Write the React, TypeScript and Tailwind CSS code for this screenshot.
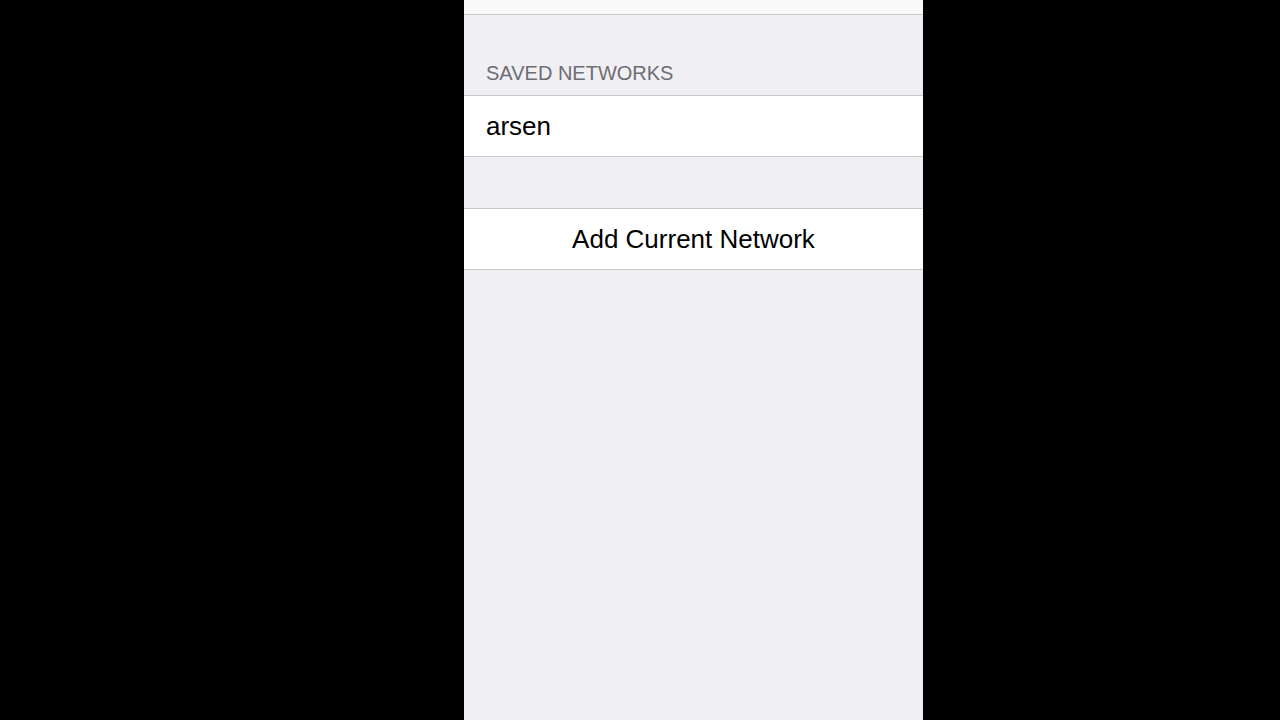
import React from 'react';

const App: React.FC = () => {
  return (
    <div className="w-[1280px] h-[720px] bg-black flex pl-[464px] overflow-hidden" style={{ fontFamily: '"Liberation Sans", Arial, sans-serif' }}>
      <div className="w-[459px] h-full bg-[#efeff4] flex flex-col">
        <div className="h-[15px] bg-[#f9f9f9] border-b border-[#c8c7cc]" />
        <div className="h-[80px] flex items-end pl-[22px] pb-[12px]">
          <span className="text-[20px] leading-none text-[#6d6d72] uppercase">Saved Networks</span>
        </div>
        <div className="h-[62px] bg-white border-y border-[#c8c7cc] flex items-center pl-[22px]">
          <span className="text-[26px] text-black leading-none">arsen</span>
        </div>
        <div className="h-[51px]" />
        <div className="h-[62px] bg-white border-y border-[#c8c7cc] flex items-center justify-center">
          <span className="text-[26px] text-black leading-none">Add Current Network</span>
        </div>
      </div>
    </div>
  );
};

export default App;
